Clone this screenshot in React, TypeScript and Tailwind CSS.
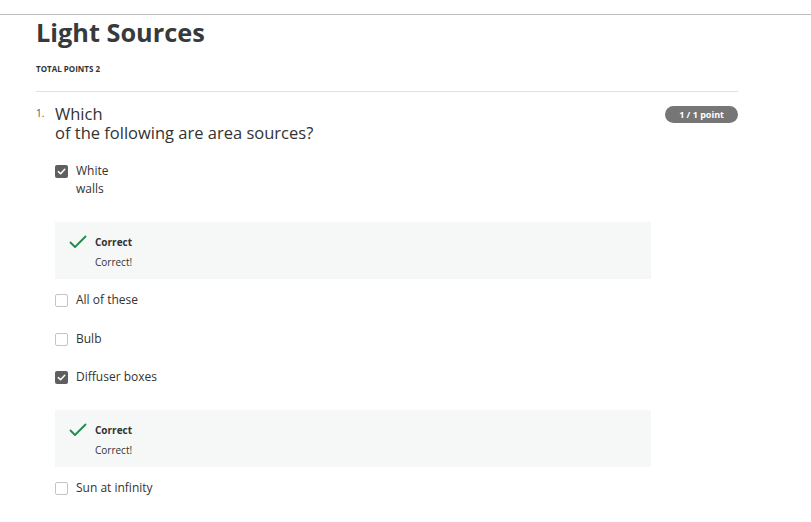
import React from 'react';

type Option = {
    label: React.ReactNode;
    checked: boolean;
    feedback?: boolean;
};

const options: Option[] = [
    {label: <>White<br/>walls</>, checked: true, feedback: true},
    {label: 'All of these', checked: false},
    {label: 'Bulb', checked: false},
    {label: 'Diffuser boxes', checked: true, feedback: true},
    {label: 'Sun at infinity', checked: false},
];

function Checkbox({checked}: { checked: boolean }) {
    if (checked) {
        return (
            <span className="flex h-[13px] w-[13px] shrink-0 items-center justify-center rounded-[2px] bg-[#5f5f5f]">
                <svg width="9" height="9" viewBox="0 0 10 10" fill="none">
                    <path d="M1.5 5.2 L4 7.5 L8.6 2.6" stroke="white" strokeWidth="1.7" strokeLinecap="round" strokeLinejoin="round"/>
                </svg>
            </span>
        );
    }
    return <span className="block h-[13px] w-[13px] shrink-0 rounded-[2px] border border-[#c4c4c4] bg-white"/>;
}

function Feedback() {
    return (
        <div className="flex h-[57px] w-[596px] bg-[#f5f8f7] pl-[14px] pt-[10px]">
            <svg width="18" height="14" viewBox="0 0 18 14" fill="none" className="mt-[3px]">
                <path d="M1.5 7.5 L6 12 L16.5 1.5" stroke="#1f8a4c" strokeWidth="1.8" strokeLinecap="round" strokeLinejoin="round"/>
            </svg>
            <div className="ml-[8px] text-[10px] leading-[20px] text-[#333]">
                <div className="font-bold">Correct</div>
                <div>Correct!</div>
            </div>
        </div>
    );
}

export default function App() {
    return (
        <div className="min-h-[522px] bg-white font-['Open_Sans',sans-serif] text-[#333]">
            <div className="h-[15px] border-b border-[#bdbdbd]"/>
            <div className="ml-[36px] w-[702px]">
                <h1 className="text-[25.3px] font-bold leading-[34px] text-[#373a3c]">Light Sources</h1>
                <div className="mt-[14px] text-[8px] font-bold uppercase leading-[12px] text-[#333]">Total points 2</div>
                <div className="mt-[16px] border-b border-[#e1e1e1]"/>

                <div className="mt-[13px] flex">
                    <div className="w-[19px] pt-[1px] text-[10px] leading-[14px] text-[#555]">1.</div>
                    <div className="flex-1">
                        <div className="flex items-start justify-between">
                            <div className="text-[16.5px] leading-[18.5px] text-[#333]">
                                Which<br/>of the following are area sources?
                            </div>
                            <span className="mt-[1px] rounded-full bg-[#767676] px-[14px] text-[9px] font-bold leading-[17px] text-white">
                                1 / 1 point
                            </span>
                        </div>

                        <div className="mt-[20px] flex flex-col">
                            {options.map((o, i) => (
                                <div key={i} className={o.feedback ? 'mb-[12px]' : 'mb-[20.5px]'}>
                                    <div className="flex items-start gap-[8px]">
                                        <div className="pt-[3px]"><Checkbox checked={o.checked}/></div>
                                        <div className="text-[12px] leading-[18px] text-[#333]">{o.label}</div>
                                    </div>
                                    {o.feedback && <div className="mt-[24px]"><Feedback/></div>}
                                </div>
                            ))}
                        </div>
                    </div>
                </div>
            </div>
        </div>
    );
}
